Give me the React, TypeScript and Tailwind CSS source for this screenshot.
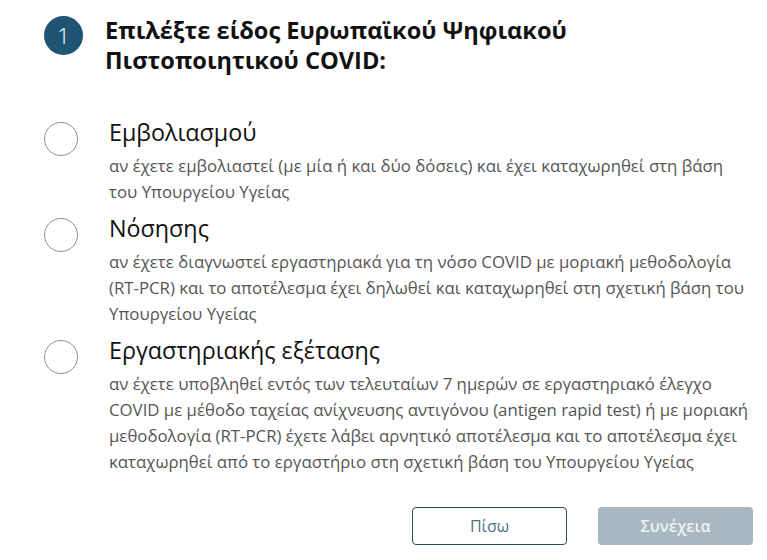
import React from "react";

const options = [
  {
    title: "Εμβολιασμού",
    desc: "αν έχετε εμβολιαστεί (με μία ή και δύο δόσεις) και έχει καταχωρηθεί στη βάση του Υπουργείου Υγείας",
  },
  {
    title: "Νόσησης",
    desc: "αν έχετε διαγνωστεί εργαστηριακά για τη νόσο COVID με μοριακή μεθοδολογία (RT-PCR) και το αποτέλεσμα έχει δηλωθεί και καταχωρηθεί στη σχετική βάση του Υπουργείου Υγείας",
  },
  {
    title: "Εργαστηριακής εξέτασης",
    desc: "αν έχετε υποβληθεί εντός των τελευταίων 7 ημερών σε εργαστηριακό έλεγχο COVID με μέθοδο ταχείας ανίχνευσης αντιγόνου (antigen rapid test) ή με μοριακή μεθοδολογία (RT-PCR) έχετε λάβει αρνητικό αποτέλεσμα και το αποτέλεσμα έχει καταχωρηθεί από το εργαστήριο στη σχετική βάση του Υπουργείου Υγείας",
  },
];

export default function App() {
  return (
    <div
      className="w-[767px] h-[560px] bg-white pl-[44px] pr-[12px] pt-[16px]"
      style={{ fontFamily: '"Open Sans", "Noto Sans", sans-serif' }}
    >
      {/* step header */}
      <div className="flex items-start gap-[22px]">
        <div className="w-[39px] h-[39px] shrink-0 rounded-full bg-[#1f5572] text-white flex items-center justify-center text-[22px] font-light">
          1
        </div>
        <h1 className="text-[23.6px] leading-[30px] font-bold text-[#111] w-[500px] -mt-[1px]">
          Επιλέξτε είδος Ευρωπαϊκού Ψηφιακού Πιστοποιητικού COVID:
        </h1>
      </div>

      {/* options */}
      <div className="mt-[42px] flex flex-col gap-[8px]">
        {options.map((o) => (
          <div key={o.title} className="flex items-start gap-[31px]">
            <div className="w-[34px] h-[34px] shrink-0 rounded-full border border-[#8f8f8f] mt-[5px]" />
            <div className="flex-1">
              <div className="text-[23.3px] leading-[30px] text-[#111]">{o.title}</div>
              <p className="mt-[6px] text-[16.8px] leading-[26px] text-[#555]">{o.desc}</p>
            </div>
          </div>
        ))}
      </div>

      {/* actions */}
      <div className="mt-[32px] flex justify-end gap-[31px] pr-[2px]">
        <button className="w-[155px] h-[38px] rounded-[4px] border border-[#2c4a5a] text-[16px] text-[#4f7585]">
          Πίσω
        </button>
        <button className="w-[155px] h-[38px] rounded-[4px] bg-[#a9b8c0] text-[16px] font-semibold text-[#eef2f4]">
          Συνέχεια
        </button>
      </div>
    </div>
  );
}
